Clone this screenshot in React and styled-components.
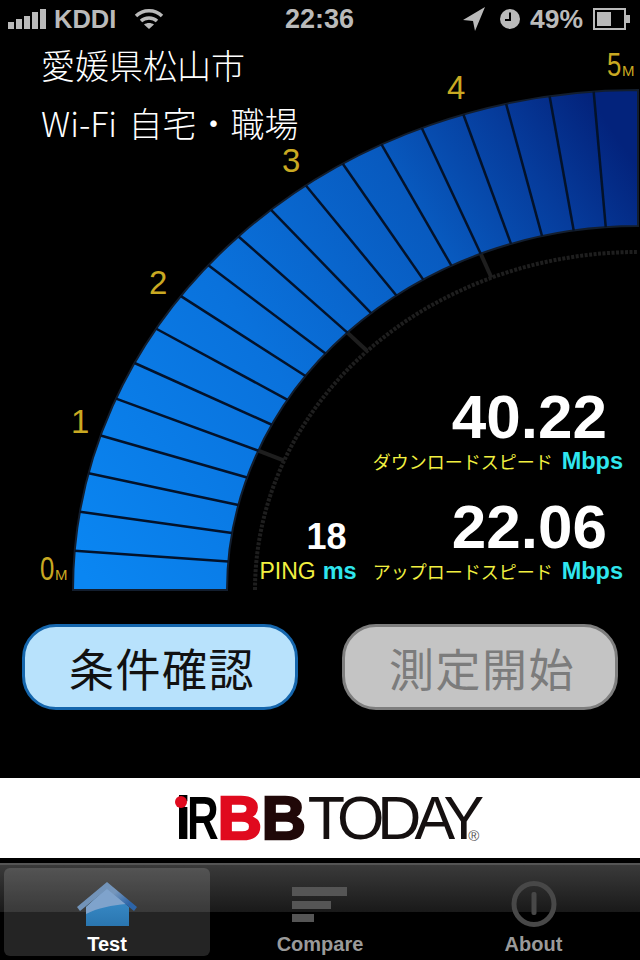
import React from 'react';
import styled, { createGlobalStyle } from 'styled-components';

const GlobalStyle = createGlobalStyle`
    html, body {
        margin: 0;
        padding: 0;
        background: #000;
    }
`;

const cjk = '"Noto Sans CJK JP", "Liberation Sans", sans-serif';
const latin = '"Liberation Sans", "Noto Sans CJK JP", sans-serif';

const Page = styled.div`
    display: flex;
    flex-direction: column;
    width: 640px;
    height: 960px;
    overflow: hidden;
    background: #000;
`;

const StatusBar = styled.div`
    display: grid;
    grid-template-columns: 1fr auto 1fr;
    align-items: center;
    height: 40px;
    padding: 0 9px 2px 8px;
    box-sizing: border-box;
    font-family: ${latin};
    font-size: 26px;
    font-weight: 700;
    color: #bababa;
`;

const StatusLeft = styled.div`
    display: flex;
    align-items: center;
    gap: 8px;
`;

const StatusRight = styled.div`
    display: flex;
    align-items: center;
    justify-content: flex-end;
    gap: 10px;
`;

const Carrier = styled.span`
    margin-right: 10px;
    font-size: 25.5px;
`;

const Clock = styled.span`
    font-size: 27px;
`;

const ArrowSlot = styled.span`
    display: flex;
    margin-right: 5px;
`;

const Battery = styled.span`
    font-size: 26.5px;
`;

const Stage = styled.div`
    position: relative;
    height: 560px;
`;

const GaugeSvg = styled.svg`
    position: absolute;
    top: 0;
    left: 0;
    width: 640px;
    height: 560px;
`;

const Location = styled.div`
    position: absolute;
    top: -4px;
    left: 41px;
    font-family: ${cjk};
    font-size: 34px;
    font-weight: 300;
    line-height: 58px;
    word-spacing: 4px;
    color: #fff;
`;

const Readings = styled.div`
    position: absolute;
    right: 17px;
    bottom: 16px;
    display: grid;
    grid-template-columns: auto auto;
    column-gap: 16px;
    row-gap: 25px;
    align-items: end;
`;

const SpeedBlock = styled.div`
    display: flex;
    flex-direction: column;
    grid-column: 2;
`;

const PingBlock = styled.div`
    display: flex;
    flex-direction: column;
    align-items: flex-end;
    grid-column: 1;
`;

const SpeedValue = styled.div`
    height: 56px;
    margin: 0 16px 3px 0;
    font-family: ${latin};
    font-size: 62px;
    font-weight: 700;
    line-height: 56px;
    text-align: right;
    color: #fff;
`;

const PingValue = styled.div`
    height: 38px;
    margin: 0 10px 2px 0;
    font-family: ${latin};
    font-size: 36px;
    font-weight: 700;
    line-height: 38px;
    color: #fff;
`;

const LabelRow = styled.div`
    display: flex;
    align-items: center;
    gap: ${({ $gap }) => $gap}px;
    height: 26px;
`;

const SpeedLabel = styled.span`
    font-family: ${cjk};
    font-size: 18px;
    line-height: 26px;
    color: #f2f040;
`;

const PingLabel = styled.span`
    font-family: ${latin};
    font-size: 23px;
    line-height: 26px;
    color: #f2f040;
`;

const Unit = styled.span`
    font-family: ${latin};
    font-size: 23.5px;
    font-weight: 700;
    line-height: 26px;
    color: #2fe6ee;
`;

const ButtonRow = styled.div`
    display: flex;
    justify-content: space-between;
    padding: 24px 22px 0 22px;
`;

const ActionButton = styled.button`
    width: 276px;
    height: 86px;
    padding: 0 0 0 4px;
    box-sizing: border-box;
    border: 3px solid ${({ $off }) => ($off ? '#7e7e7e' : '#1566ad')};
    border-radius: 34px;
    background: ${({ $off }) => ($off ? '#c4c4c4' : '#b8e2fc')};
    color: ${({ $off }) => ($off ? '#7c7c7c' : '#111')};
    font-family: ${cjk};
    font-size: 45px;
    letter-spacing: 1.5px;
    line-height: 1;
`;

const AdBanner = styled.div`
    display: flex;
    align-items: center;
    justify-content: center;
    height: 80px;
    margin-top: auto;
    padding-left: 14px;
    box-sizing: border-box;
    background: #fff;
    font-family: ${latin};
    font-size: 61px;
    line-height: 82px;
    overflow: hidden;
`;

const LogoI = styled.span`
    position: relative;
    font-weight: 700;
    color: #000;
    letter-spacing: -5px;

    &::before {
        content: '';
        position: absolute;
        left: 0;
        top: 19px;
        width: 12px;
        height: 12px;
        border-radius: 50%;
        background: #e00a1e;
    }
`;

const LogoR = styled.span`
    display: inline-block;
    width: 31px;
    font-weight: 700;
    color: #000;
    transform: scaleX(0.72);
    transform-origin: left center;
`;

const LogoB = styled.span`
    font-weight: 700;
    color: ${({ $color }) => $color};
    -webkit-text-stroke: 2.5px ${({ $color }) => $color};
`;

const LogoToday = styled.span`
    margin-left: 2px;
    font-weight: 400;
    letter-spacing: -7px;
    color: #151010;
`;

const LogoMark = styled.span`
    align-self: flex-end;
    margin: 0 0 15px -9px;
    font-size: 15px;
    line-height: 14px;
    color: #555;
`;

const TabBar = styled.div`
    display: grid;
    grid-template-columns: 209px 214px 1fr;
    height: 97px;
    margin-top: 5px;
    padding: 3px 0 4px 4px;
    box-sizing: border-box;
    border-top: 2px solid #555;
    background: linear-gradient(to bottom, #3a3a3a 0, #191919 47px, #000 47px, #000 100%);
`;

const Tab = styled.div`
    display: flex;
    flex-direction: column;
    align-items: center;
    justify-content: flex-end;
    margin-right: ${({ $active }) => ($active ? '3px' : '0')};
    border-radius: 6px;
    background: ${({ $active }) => ($active ? 'rgba(255, 255, 255, 0.14)' : 'transparent')};
`;

const TabLabel = styled.span`
    margin-top: 5px;
    font-family: ${latin};
    font-size: 20px;
    font-weight: 700;
    line-height: 24px;
    color: ${({ $active }) => ($active ? '#fff' : '#9a9a9a')};
`;

// gauge is an ellipse quarter, centre at the lower right of the stage
const CX = 638;
const CY = 590;
const OUTER = { rx: 565, ry: 500 };
const INNER = { rx: 411, ry: 364 };
const SCALE = { rx: 383, ry: 338 };

const pt = (e, deg) => {
    const t = (deg * Math.PI) / 180;
    return [CX - e.rx * Math.cos(t), CY - e.ry * Math.sin(t)];
};

const arc = (e) => `M${pt(e, 0).join(' ')} A${e.rx} ${e.ry} 0 0 1 ${pt(e, 90).join(' ')}`;

const band = `${arc(OUTER)} L${pt(INNER, 90).join(' ')} A${INNER.rx} ${INNER.ry} 0 0 0 ${pt(INNER, 0).join(' ')} Z`;

const dividers = Array.from({ length: 19 }, (_, i) => (i + 1) * 4.5);
const majorTicks = [22.5, 45, 67.5];

const gaugeLabels = [
    { text: '0', x: 40, y: 580, sx: 0.78, unit: true, ux: 55, uy: 580 },
    { text: '1', x: 71, y: 433, sx: 1 },
    { text: '2', x: 149, y: 294, sx: 1 },
    { text: '3', x: 282, y: 172, sx: 1 },
    { text: '4', x: 447, y: 99, sx: 1 },
    { text: '5', x: 607, y: 76, sx: 0.78, unit: true, ux: 622, uy: 76 },
];

const Gauge = () => (
    <GaugeSvg viewBox="0 40 640 560">
        <defs>
            <linearGradient id="band" gradientUnits="userSpaceOnUse" x1="73" y1="560" x2="640" y2="170">
                <stop offset="0" stopColor="#0a86f2" />
                <stop offset="0.4" stopColor="#0a72dc" />
                <stop offset="0.7" stopColor="#085abf" />
                <stop offset="0.87" stopColor="#063c9c" />
                <stop offset="1" stopColor="#03237c" />
            </linearGradient>
        </defs>
        <path d={arc(SCALE)} fill="none" stroke="#1e1e1e" strokeWidth="4" strokeDasharray="3 1.5" />
        {majorTicks.map((deg) => {
            const a = pt(INNER, deg);
            const b = pt(SCALE, deg);
            return <line key={deg} x1={a[0]} y1={a[1]} x2={b[0]} y2={b[1]} stroke="#1e1e1e" strokeWidth="4" />;
        })}
        <path d={band} fill="url(#band)" stroke="#131e2e" strokeWidth="2" />
        {dividers.map((deg) => {
            const a = pt(OUTER, deg);
            const b = pt(INNER, deg);
            return <line key={deg} x1={a[0]} y1={a[1]} x2={b[0]} y2={b[1]} stroke="#03122a" strokeWidth="2.5" />;
        })}
        <g fill="#c9a922" fontFamily="Liberation Sans">
            {gaugeLabels.map((l) => (
                <g key={l.text}>
                    <text transform={`translate(${l.x} ${l.y}) scale(${l.sx} 1)`} fontSize="33">{l.text}</text>
                    {l.unit && <text x={l.ux} y={l.uy} fontSize="15">M</text>}
                </g>
            ))}
        </g>
    </GaugeSvg>
);

const SignalIcon = () => (
    <svg width="38" height="20" viewBox="0 0 38 20" fill="#bababa">
        <rect x="0" y="13" width="6" height="7" />
        <rect x="8" y="10" width="6" height="10" />
        <rect x="16" y="7" width="6" height="13" />
        <rect x="24" y="3" width="6" height="17" />
        <rect x="32" y="0" width="6" height="20" />
    </svg>
);

const WifiIcon = () => (
    <svg width="30" height="22" viewBox="0 0 30 22" fill="none" stroke="#bababa" strokeWidth="3.4">
        <path d="M2 8 C9 1 21 1 28 8" />
        <path d="M7 13 C11 9 19 9 23 13" />
        <path d="M15 21 L10 16.5 C13 14.5 17 14.5 20 16.5 Z" fill="#bababa" stroke="none" />
    </svg>
);

const ArrowIcon = () => (
    <svg width="22" height="24" viewBox="0 0 22 24" fill="#bababa">
        <path d="M22 0 L0 13 L10 14 L12 24 Z" />
    </svg>
);

const AlarmIcon = () => (
    <svg width="20" height="20" viewBox="0 0 20 20">
        <circle cx="10" cy="10" r="10" fill="#bababa" />
        <path d="M10 3.5 V11 H5" fill="none" stroke="#000" strokeWidth="2" />
    </svg>
);

const BatteryIcon = () => (
    <svg width="38" height="22" viewBox="0 0 38 22">
        <rect x="1" y="1" width="31" height="20" fill="none" stroke="#bababa" strokeWidth="2" />
        <rect x="4" y="4" width="14" height="14" fill="#bababa" />
        <rect x="33" y="7" width="4" height="8" fill="#bababa" />
    </svg>
);

const HouseIcon = () => (
    <svg width="60" height="45" viewBox="0 0 60 45">
        <defs>
            <linearGradient id="roof" x1="0" y1="0" x2="1" y2="0.5">
                <stop offset="0" stopColor="#6d8fb4" />
                <stop offset="0.65" stopColor="#7596bc" />
                <stop offset="1" stopColor="#2c64a8" />
            </linearGradient>
            <linearGradient id="body" x1="0" y1="0" x2="0" y2="1">
                <stop offset="0" stopColor="#3f93d0" />
                <stop offset="1" stopColor="#2a76b0" />
            </linearGradient>
        </defs>
        <path d="M9 25 L30 6 L52 25 V44 H9 Z" fill="url(#body)" />
        <path d="M9 25 L30 6 L49 22 C36 23 20 26 9 32 Z" fill="#7fa3cc" />
        <path d="M0 25 L30 0 L60 25 L57 29 L30 7 L3 29 Z" fill="url(#roof)" />
    </svg>
);

const CompareIcon = () => (
    <svg width="56" height="45" viewBox="0 0 56 45" fill="#555">
        <rect x="0" y="5" width="55" height="9" />
        <rect x="0" y="19" width="39" height="8" />
        <rect x="0" y="32" width="22" height="8" />
    </svg>
);

const AboutIcon = () => (
    <svg width="46" height="46" viewBox="0 0 46 46">
        <ellipse cx="23" cy="23" rx="20" ry="20.5" fill="none" stroke="#484848" strokeWidth="5" />
        <rect x="20.5" y="11" width="5" height="23" rx="2" fill="#484848" />
    </svg>
);

const App = () => (
    <Page>
        <GlobalStyle />
        <StatusBar>
            <StatusLeft>
                <SignalIcon />
                <Carrier>KDDI</Carrier>
                <WifiIcon />
            </StatusLeft>
            <Clock>22:36</Clock>
            <StatusRight>
                <ArrowSlot><ArrowIcon /></ArrowSlot>
                <AlarmIcon />
                <Battery>49%</Battery>
                <BatteryIcon />
            </StatusRight>
        </StatusBar>
        <Stage>
            <Gauge />
            <Location>
                <div>愛媛県松山市</div>
                <div>Wi-Fi 自宅・職場</div>
            </Location>
            <Readings>
                <SpeedBlock>
                    <SpeedValue>40.22</SpeedValue>
                    <LabelRow $gap={9}>
                        <SpeedLabel>ダウンロードスピード</SpeedLabel>
                        <Unit>Mbps</Unit>
                    </LabelRow>
                </SpeedBlock>
                <PingBlock>
                    <PingValue>18</PingValue>
                    <LabelRow $gap={7}>
                        <PingLabel>PING</PingLabel>
                        <Unit>ms</Unit>
                    </LabelRow>
                </PingBlock>
                <SpeedBlock>
                    <SpeedValue>22.06</SpeedValue>
                    <LabelRow $gap={9}>
                        <SpeedLabel>アップロードスピード</SpeedLabel>
                        <Unit>Mbps</Unit>
                    </LabelRow>
                </SpeedBlock>
            </Readings>
        </Stage>
        <ButtonRow>
            <ActionButton>条件確認</ActionButton>
            <ActionButton $off>測定開始</ActionButton>
        </ButtonRow>
        <AdBanner>
            <LogoI>i</LogoI>
            <LogoR>R</LogoR>
            <LogoB $color="#e00a1e">B</LogoB>
            <LogoB $color="#200808">B</LogoB>
            <LogoToday>TODAY</LogoToday>
            <LogoMark>®</LogoMark>
        </AdBanner>
        <TabBar>
            <Tab $active>
                <HouseIcon />
                <TabLabel $active>Test</TabLabel>
            </Tab>
            <Tab>
                <CompareIcon />
                <TabLabel>Compare</TabLabel>
            </Tab>
            <Tab>
                <AboutIcon />
                <TabLabel>About</TabLabel>
            </Tab>
        </TabBar>
    </Page>
);

export default App;
